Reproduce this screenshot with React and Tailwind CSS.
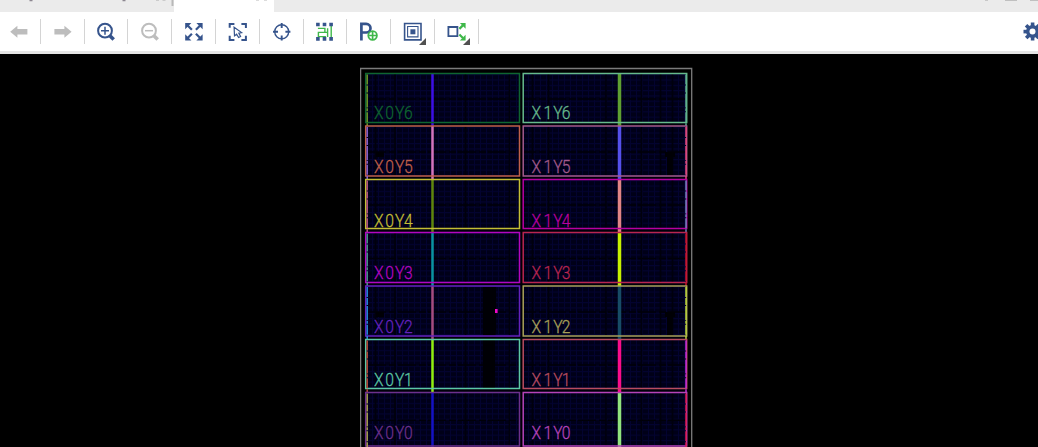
import React from "react";

const BLUE = "#36548c";
const GREEN = "#3fb84a";

const rows = [
  { n: 6, top: 73.5, bottom: 122.5, base: 119, l: "#0f6530", r: "#66ba8c", lb: "#3c0fe6", rb: "#5fa032", le: "#6f9a25", re: "#5fae91" },
  { n: 5, top: 126, bottom: 176, base: 173, l: "#c0604a", r: "#a45a8c", lb: "#d373bd", rb: "#5550ea", le: "#8a62cc", re: "#e8467e" },
  { n: 4, top: 179.5, bottom: 228.5, base: 226.5, l: "#c4be35", r: "#b800a0", lb: "#5f860d", rb: "#e18586", le: "#b85682", re: "#7184c0" },
  { n: 3, top: 232.5, bottom: 282.5, base: 279, l: "#b306c0", r: "#b92550", lb: "#0a93a2", rb: "#c7f000", le: "#4c948b", re: "#c8152d" },
  { n: 2, top: 286, bottom: 336, base: 333, l: "#6522be", r: "#a9a05a", lb: "#a54c80", rb: "#174c66", le: "#2588dd", re: "#b9d33c" },
  { n: 1, top: 339.5, bottom: 388.5, base: 385.5, l: "#5cc8a5", r: "#b94c60", lb: "#91ef10", rb: "#fa0c8b", le: "#b84934", re: "#c52bdd" },
  { n: 0, top: 392.5, bottom: 446, base: 439, l: "#6d308c", r: "#b643b8", lb: "#1512c4", rb: "#91e47e", le: "#aaa04c", re: "#e01850" },
];

function Icon({ children }) {
  return <svg width="24" height="26" viewBox="0.6 0.3 24 26" fill="none" className="shrink-0">{children}</svg>;
}

const Arrow = ({ flip }) => (
  <Icon><path transform={flip ? "translate(25 0) scale(-1 1)" : undefined} d="M3.8 13 11 7V10.3H21V15.7H11V19Z" fill="#bdbdbd" /></Icon>
);
const Zoom = ({ plus, color }) => (
  <Icon>
    <circle cx="11.6" cy="12" r="6.9" stroke={color} strokeWidth="2" />
    <path d={plus ? "M7.6 12h8M11.6 8v8" : "M7.6 12h8"} stroke={color} strokeWidth="1.5" />
    <path d="M16.5 17l3.8 3.8" stroke={color} strokeWidth="3.6" />
  </Icon>
);
const Fit = () => (
  <Icon>
    <g fill={BLUE} stroke={BLUE}>
      {[0, 90, 180, 270].map((a) => (
        <g key={a} transform={`rotate(${a} 12.5 13)`}>
          <path d="M3.8 4.3h6.2L3.8 10.5Z" stroke="none" />
          <path d="M5.5 6l5 5" strokeWidth="2.2" />
        </g>
      ))}
    </g>
  </Icon>
);
const Select = () => (
  <Icon>
    <path d="M4.3 9V5.2H9M16 5.2h4.5v4M20.5 17v4.2H16M9 21.2H4.3V17" stroke={BLUE} strokeWidth="2" />
    <path d="M8.7 8.5l.4 8.7 2.1-1.7 2 3.3 2-1-1.8-3.4 2.8-.5Z" stroke={BLUE} strokeWidth="1.2" />
  </Icon>
);
const Target = () => (
  <Icon>
    <circle cx="12.3" cy="13" r="7" stroke={BLUE} strokeWidth="1.4" />
    <path d="M12.3 4.3v5M12.3 16.7v5M3.6 13h5M16 13h5" stroke={BLUE} strokeWidth="1.9" />
  </Icon>
);
const Route = () => (
  <Icon>
    <path d="M5.5 9.7h7v4H6v4.2h7.5M15.2 9.5v8.7M15.2 13.7h-2.7M18.8 7v12" stroke={GREEN} strokeWidth="1.4" />
    {[3.7, 10.3, 16.9].map((x) => <path key={x} d={`M${x} 4h3.6v3.6h-3.6zM${x} 18.4h3.6V22h-3.6z`} fill={BLUE} />)}
  </Icon>
);
const PAdd = () => (
  <Icon>
    <path d="M5 21.8V5.2h4.8a4.3 4.3 0 0 1 0 8.6H5" stroke={BLUE} strokeWidth="2.7" />
    <circle cx="16.2" cy="16.8" r="4.3" fill="white" stroke={GREEN} strokeWidth="1.8" />
    <path d="M12.700 16.8h7M16.2 13.3v7" stroke={GREEN} strokeWidth="1.7" />
  </Icon>
);
const Layers = () => (
  <Icon>
    <path d="M4.2 4.8h16.4v16.4H4.2z" stroke={BLUE} strokeWidth="1.6" />
    <path d="M7.2 7.8h10.4v10.4H7.2z" stroke={BLUE} strokeWidth="1.1" />
    <path d="M10 10.6h5v5h-5z" fill={BLUE} />
  </Icon>
);
const Expand = () => (
  <Icon>
    <path d="M4 8.3h9v9.2H4z" stroke={BLUE} strokeWidth="1.8" />
    <path d="M15 10.2l3.500-3.500M15 15.8l3.500 3.500" stroke={GREEN} strokeWidth="2.2" />
    <path d="M15.5 4.3h5.7v5.7zM15.5 21.7h5.7v-5.7z" fill={GREEN} />
  </Icon>
);
const Corner = () => <svg width="7" height="7" className="absolute right-[8.5px] bottom-0"><path d="M7 0V7H0z" fill="#505050" /></svg>;

const tools = [
  <Arrow />, <Arrow flip />, <Zoom plus color={BLUE} />, <Zoom color="#bdbdbd" />, <Fit />, <Select />,
  <Target />, <Route />, <PAdd />, <Layers />, <Expand />,
];

function Region({ x, w, color, row, label, edgeX, edge, barX, barW, bar, next }) {
  const h = row.bottom - row.top;
  return (
    <g>
      <path d={`M${barX} ${row.top}V${next}`} stroke={bar} strokeWidth={barW} />
      <rect x={x} y={row.top} width={w} height={h} fill="none" stroke={color} strokeWidth="1.5" />
      <path d={`M${edgeX} ${row.top + 1}V${next}`} stroke={edge} strokeWidth="1.5" strokeDasharray="10 1 7 1 14 .7 3 1" />
      <text
        transform={`translate(${x + 8.3} ${row.base + 0.3}) scale(.88 1)`}
        x={label[1] === "1" ? "0 13.6 24.8 34.4" : "0 12.8 24 34"}
        fill={color}
        stroke={color}
        strokeWidth=".3"
        className="font-[Roboto,'Liberation_Sans',sans-serif] text-[17.8px] font-light"
      >{label}</text>
    </g>
  );
}

function Device() {
  return (
    <svg width="334" height="393" viewBox="360 54 334 393" className="block">
      <defs>
        <pattern id="cells" width="6" height="5.3" patternUnits="userSpaceOnUse">
          <rect width="6" height="5.3" fill="#000018" />
          <path d="M0 .5H6M.5 0V5.3" stroke="#030330" strokeWidth="1" />
        </pattern>
      </defs>
      <path d="M360.6 460V68.5H691.7V460" fill="none" stroke="#7b7b7b" strokeWidth="1.3" />
      <rect x="365" y="73" width="322" height="374" fill="url(#cells)" />
      <path d="M375.5 73V447M395 73V447M465.5 73V447M509.5 73V447M532.5 73V447M548.5 73V447M606 73V447M641.5 73V447M660.5 73V447M672.5 73V447" stroke="#00000c" strokeWidth="1.6" />
      {rows.map((r) => (
        <g key={r.n}>
          <path d={`M368 ${(r.top + r.bottom) / 2 + 1}H685`} stroke="#000008" strokeWidth="1.5" strokeDasharray="18 3 7 2" />
          <path d={`M365 ${r.bottom + 2}H687`} stroke="#000009" strokeWidth="2.5" />
        </g>
      ))}
      <path d="M483 287H496V330L495 340V388H483zM519 73h4V447h-4z" fill="#000005" />
      <path d="M665 152h10v5h-2v19h-6v-19h-2zM665 312h10v5h-2v19h-6v-19h-2zM376 152h8v5h-8zM376 312h8v5h-8z" fill="#000005" />
      {rows.map((r, i) => {
        const next = rows[i + 1] ? rows[i + 1].top : 447;
        return (
          <g key={r.n}>
            <Region x={365.7} w={153.8} color={r.l} row={r} label={`X0Y${r.n}`} edgeX={367.2} edge={r.le} barX={432.5} barW={2.5} bar={r.lb} next={next} />
            <Region x={523.2} w={163.5} color={r.r} row={r} label={`X1Y${r.n}`} edgeX={686} edge={r.re} barX={619.5} barW={3.5} bar={r.rb} next={next} />
          </g>
        );
      })}
      <rect x="495" y="309" width="2.6" height="4" fill="#ee08c8" />
    </svg>
  );
}

export default function App() {
  return (
    <div className="flex h-[447px] w-[1038px] flex-col overflow-hidden bg-black">
      <div className="flex h-3 shrink-0 bg-[#ebebeb]">
        <svg width="174" height="12" className="shrink-0">
          <path d="M29.5 .5h3M122.5 .5h3" stroke="#8d8791" strokeWidth="1.5" />
          <path d="M156 .3h3M162.5 .3h3" stroke="#c4c4c4" />
          <path d="M172.5 0V6" stroke="#b8b8b8" strokeWidth="2" />
        </svg>
        <svg width="100" height="12" className="shrink-0 bg-white"><path d="M82 .3h3M90 .3h3" stroke="#d4d4d4" /></svg>
        <svg width="60" height="12" className="ml-auto shrink-0"><path d="M7 .3h3M27 .5h12M52 .5h8" stroke="#c0c0c0" /></svg>
      </div>
      <div className="flex h-[42px] shrink-0 items-start overflow-hidden border-b-[3px] border-[#e5e5e5] bg-white pt-[6px]">
        <div className="-ml-[3px] flex">
          {tools.map((t, i) => (
            <div key={i} className="relative flex h-[27px] w-[43.8px] shrink-0 items-center justify-center">
              {t}
              {i > 8 && <Corner />}
              <span className="absolute top-[1px] right-0 h-[25px] w-px bg-[#d4d4d4]" />
            </div>
          ))}
        </div>
        <svg width="16" height="27" viewBox="0 0 16 27" className="ml-auto shrink-0">
          <g fill={BLUE}>
            {[0, 45, 90, 135].map((a) => <rect key={a} x="8.8" y="4.5" width="3.6" height="18" transform={`rotate(${a} 10.5 13.5)`} />)}
            <circle cx="10.5" cy="13.5" r="6.5" />
          </g>
          <circle cx="10.5" cy="13.5" r="3" fill="white" />
        </svg>
      </div>
      <main className="flex flex-1 pl-[360px]"><Device /></main>
    </div>
  );
}
